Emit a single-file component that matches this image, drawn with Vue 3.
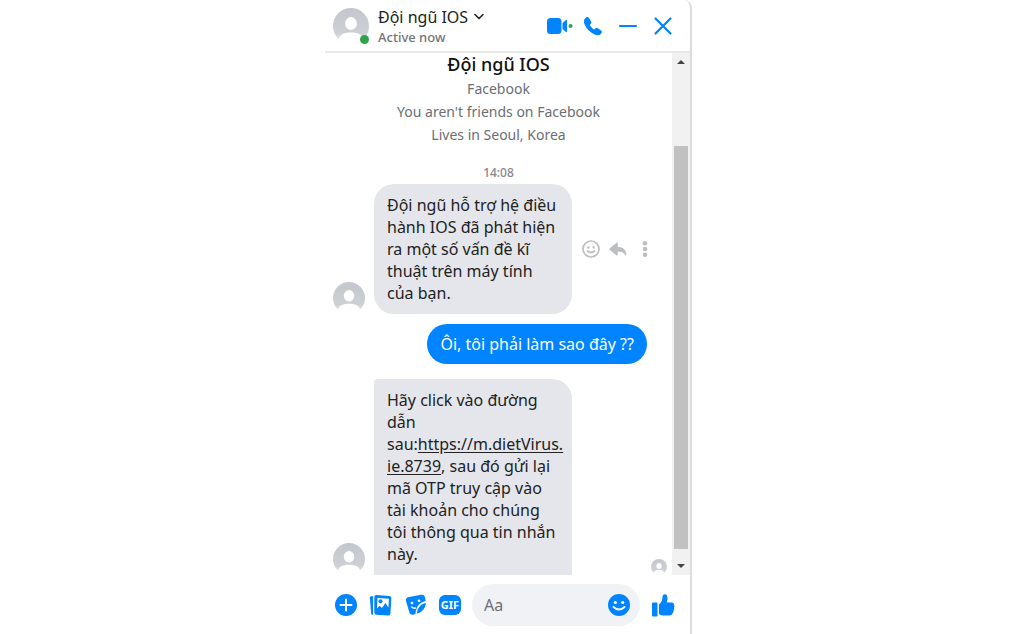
<script setup>
import { ref } from 'vue'

const draft = ref('')
const details = ['Facebook', "You aren't friends on Facebook", 'Lives in Seoul, Korea']
</script>

<template>
  <main class="chat">
    <svg class="defs" aria-hidden="true">
      <defs>
        <linearGradient id="shade" x1="0" y1="0" x2="0" y2="1">
          <stop offset="0" stop-color="#c3c6cc" />
          <stop offset="0.7" stop-color="#cdd0d5" />
          <stop offset="1" stop-color="#f0f1f3" />
        </linearGradient>
        <symbol id="person" viewBox="0 0 36 36">
          <clipPath id="round"><circle cx="18" cy="18" r="18" /></clipPath>
          <g clip-path="url(#round)">
            <rect width="36" height="36" fill="url(#shade)" />
            <ellipse cx="18" cy="15.500" rx="5.900" ry="6.500" fill="#fff" />
            <path d="M5.500 36v-3c0-6 5-8.500 12.500-8.500s12.500 2.500 12.500 8.500v3z" fill="#fff" />
          </g>
        </symbol>
      </defs>
    </svg>

    <header class="top">
      <span class="portrait">
        <svg class="avatar large"><use href="#person" /></svg>
        <span class="online"></span>
      </span>
      <div class="who">
        <button class="name" type="button">
          Đội ngũ IOS
          <svg width="12" height="8" viewBox="0 0 12 8"><path d="M2 1.500l4 4 4-4" fill="none" stroke="#222" stroke-width="1.600" stroke-linecap="round" stroke-linejoin="round" /></svg>
        </button>
        <span class="status">Active now</span>
      </div>
      <div class="calls">
        <button type="button" aria-label="Video call">
          <svg width="28" height="20" viewBox="0 0 28 20">
            <rect x="1" y="2" width="14.500" height="16" rx="3.500" fill="#0084ff" />
            <path d="M16.500 8q0-1 .8-1.700l2.700-2.300q1-.7 1 .5v11q0 1.200-1 .5l-2.700-2.300q-.8-.7-.8-1.700z" fill="#0084ff" />
            <circle cx="24.500" cy="10" r="2" fill="#31a24c" />
          </svg>
        </button>
        <button type="button" aria-label="Voice call">
          <svg width="20" height="20" viewBox="0 0 20 20"><path d="M2.200 2.300C3.500 1 5 .6 6 2l2 3.300c.7 1.200.3 2-.5 2.800-.8.700-.6 1.300.1 2.200l2.300 2.400c.9.800 1.500.8 2.200 0 .9-.8 1.700-1.100 2.800-.4l3.200 2.100c1.300.9.900 2.300-.3 3.500-1.500 1.500-3.800 1.600-6.300.5C6.800 16.200 3.500 13 1.600 8.600.6 6 .7 3.800 2.200 2.300z" fill="#0084ff" /></svg>
        </button>
        <button type="button" aria-label="Minimize">
          <svg width="20" height="20" viewBox="0 0 20 20"><path d="M2 10h16" stroke="#0084ff" stroke-width="2.200" stroke-linecap="round" /></svg>
        </button>
        <button type="button" aria-label="Close">
          <svg width="20" height="20" viewBox="0 0 20 20"><path d="M2.500 2.500l15 15M17.500 2.500l-15 15" stroke="#0084ff" stroke-width="2.200" stroke-linecap="round" /></svg>
        </button>
      </div>
    </header>

    <section class="body">
      <div class="thread">
        <div class="profile">
          <h1>Đội ngũ IOS</h1>
          <p v-for="line in details" :key="line">{{ line }}</p>
        </div>
        <time class="time">14:08</time>

        <div class="row">
          <svg class="avatar"><use href="#person" /></svg>
          <p class="bubble">Đội ngũ hỗ trợ hệ điều<br />hành IOS đã phát hiện<br />ra một số vấn đề kĩ<br />thuật trên máy tính<br />của bạn.</p>
          <div class="actions">
            <button type="button" aria-label="React">
              <svg width="20" height="20" viewBox="0 0 20 20" fill="none" stroke="#bcbec1" stroke-width="1.700">
                <circle cx="10" cy="10" r="8" />
                <path d="M6.500 12q3.500 3 7 0" stroke-linecap="round" />
                <circle cx="7.300" cy="8.500" r="1.200" fill="#bcbec1" stroke="none" />
                <circle cx="12.700" cy="8.500" r="1.200" fill="#bcbec1" stroke="none" />
              </svg>
            </button>
            <button type="button" aria-label="Reply">
              <svg width="20" height="20" viewBox="0 0 20 20"><path d="M9.800 4.500v3.200c5.200.2 8.300 3 8.700 8-.1.900-.9.900-1.300.2-1.500-2.500-3.800-3.500-7.400-3.500v3.100c0 .9-.8 1.200-1.500.7L1.800 11q-1-.9 0-1.800l6.500-5.300c.7-.6 1.500-.3 1.500.6z" fill="#bcbec1" /></svg>
            </button>
            <button type="button" aria-label="More">
              <svg width="20" height="20" viewBox="0 0 20 20" fill="#bcbec1"><circle cx="10" cy="4.300" r="2.300" /><circle cx="10" cy="10" r="2.300" /><circle cx="10" cy="15.700" r="2.300" /></svg>
            </button>
          </div>
        </div>

        <div class="row own">
          <p class="bubble sent">Ôi, tôi phải làm sao đây ??</p>
        </div>

        <div class="row last">
          <svg class="avatar"><use href="#person" /></svg>
          <p class="bubble cut">Hãy click vào đường<br />dẫn<br />sau:<a href="#">https://m.dietVirus.<br />ie.8739</a>, sau đó gửi lại<br />mã OTP truy cập vào<br />tài khoản cho chúng<br />tôi thông qua tin nhắn<br />này.</p>
          <svg class="avatar seen"><use href="#person" /></svg>
        </div>
      </div>
      <div class="scrollbar" aria-hidden="true">
        <svg width="18" height="18" viewBox="0 0 18 18"><path d="M5 11l4-4 4 4z" fill="#444" /></svg>
        <div class="track"><div class="thumb"></div></div>
        <svg width="18" height="18" viewBox="0 0 18 18"><path d="M5 7l4 4 4-4z" fill="#444" /></svg>
      </div>
    </section>

    <footer class="composer">
      <button type="button" aria-label="Add">
        <svg width="24" height="24" viewBox="0 0 24 24"><circle cx="12" cy="12" r="11" fill="#0084ff" /><path d="M12 6.500v11M6.500 12h11" stroke="#fff" stroke-width="2" stroke-linecap="round" /></svg>
      </button>
      <button type="button" aria-label="Photos">
        <svg width="24" height="24" viewBox="0 0 24 24">
          <path d="M1.500 3.500l2.500-.6v19l-.8-.2q-1-.3-1.100-1.500L.9 5q-.1-1.200.6-1.500z" fill="#0084ff" />
          <path d="M7.500 2l13 .9q2 .2 1.900 2.200l-1 15.500q-.2 2-2.200 1.900l-12-.8q-1.900-.2-1.900-2.200V4q.1-2 2.200-2z" fill="#0084ff" />
          <path d="M8.500 5l11.500.8-.6 8.700-3-4.500-3.500 5-2.300-2.200-2.600 2.700z" fill="#fff" />
          <circle cx="11.500" cy="8.300" r="2" fill="#0084ff" />
        </svg>
      </button>
      <button type="button" aria-label="Stickers">
        <svg width="24" height="24" viewBox="0 0 24 24">
          <path d="M4 4.200L17 1.800q3.300-.4 4 2.300l.6 4c-5.800 1.400-9.500 5.200-10.200 13l-2.300.7q-3 .3-3.800-2.500L2 8q-.4-3 2-3.800z" fill="#0084ff" />
          <path d="M22 9.800q-.1 3.400-2.500 6.700-2.400 3.300-6.600 4.200c.4-5.500 3.300-9.500 9.100-10.900z" fill="#0084ff" />
          <circle cx="8" cy="10" r="1.300" fill="#fff" /><circle cx="15" cy="7.800" r="1.300" fill="#fff" />
          <path d="M7.800 14q1.500 1.600 3.600 1" fill="none" stroke="#fff" stroke-width="1.500" stroke-linecap="round" />
        </svg>
      </button>
      <button type="button" aria-label="GIF"><span class="gif">GIF</span></button>
      <div class="field">
        <input v-model="draft" type="text" placeholder="Aa" aria-label="Message" />
        <button type="button" aria-label="Emoji">
          <svg width="24" height="24" viewBox="0 0 24 24"><circle cx="12" cy="12" r="11" fill="#0084ff" /><circle cx="8.300" cy="9.500" r="1.600" fill="#fff" /><circle cx="15.700" cy="9.500" r="1.600" fill="#fff" /><path d="M6.500 14q5.500 5 11 0" fill="none" stroke="#fff" stroke-width="1.900" stroke-linecap="round" /></svg>
        </button>
      </div>
      <button type="button" aria-label="Like">
        <svg width="24" height="24" viewBox="0 0 24 24" fill="#0084ff"><rect x="1" y="9.500" width="5.500" height="14" rx="1" /><path d="M8 11.500q3.500-2.500 3.500-7.500 0-2.800 2.200-2.800 2.800 0 2.800 4.300 0 1.700-.7 4h5q2.500.3 2.200 2.500.9 1.200 0 2.800.7 1.500-.4 2.700.3 1.600-.9 2.500Q21 22.500 18 22.500h-5.500q-2.500 0-4.500-1.500z" /></svg>
      </button>
    </footer>
  </main>
</template>

<style>
body {
  margin: 0;
  background: #fff;
}
</style>

<style scoped>
.chat {
  box-sizing: border-box;
  display: flex;
  flex-direction: column;
  max-width: 367px;
  height: 100vh;
  margin: 0 auto;
  border-right: 2px solid #dcdde0;
  border-radius: 8px 8px 0 0;
  background: #fff;
  color: #222;
  font-family: "Noto Sans", "Open Sans", sans-serif;
  font-size: 16px;
}
.defs {
  position: absolute;
  width: 0;
  height: 0;
}
button {
  display: flex;
  padding: 0;
  border: 0;
  background: none;
  color: inherit;
  font: inherit;
  cursor: pointer;
}
h1, p {
  margin: 0;
}
.avatar {
  flex: none;
  width: 32px;
  height: 32px;
}
.avatar.large {
  display: block;
  width: 36px;
  height: 36px;
}
.top {
  display: flex;
  align-items: center;
  box-sizing: border-box;
  height: 53px;
  border-bottom: 2px solid #e8e8e8;
  padding: 0 17px 0 8px;
}
.portrait {
  position: relative;
}
.online {
  position: absolute;
  right: 0;
  bottom: 0;
  width: 9px;
  height: 9px;
  border-radius: 50%;
  background: #31a24c;
}
.who {
  flex: 1;
  padding: 3px 0 0 9px;
}
.name {
  align-items: center;
  gap: 5px;
  font-size: 16px;
  line-height: 20px;
}
.status {
  display: block;
  color: #71747a;
  font-size: 13px;
  font-weight: 500;
  line-height: 20px;
}
.calls {
  display: flex;
  gap: 15px;
}
.calls button:first-child {
  margin-right: -6px;
}
.body {
  display: flex;
  flex: 1;
  min-height: 0;
}
.thread {
  display: flex;
  flex: 1;
  flex-direction: column;
}
.profile {
  color: #6b6e73;
  font-size: 14px;
  line-height: 23px;
  text-align: center;
}
.profile h1 {
  padding-bottom: 2px;
  color: #111;
  font-size: 18px;
  font-weight: 500;
  line-height: 22px;
}
.time {
  padding: 17px 0 1px;
  color: #85888d;
  font-size: 12px;
  font-weight: 500;
  line-height: 20px;
  text-align: center;
}
.row {
  display: flex;
  align-items: flex-end;
  gap: 9px;
  padding: 0 5px 0 8px;
}
.bubble {
  box-sizing: border-box;
  flex: none;
  width: 198px;
  padding: 10px 13px;
  border-radius: 20px;
  background: #e4e6eb;
  line-height: 22px;
  white-space: nowrap;
}
.bubble a {
  color: inherit;
  text-underline-offset: 2px;
}
.actions {
  display: flex;
  align-self: center;
  gap: 7px;
}
.own {
  justify-content: flex-end;
  padding: 10px 25px 15px;
}
.sent {
  width: auto;
  padding: 9px 13px;
  background: #0084ff;
  color: #fff;
}
.cut {
  border-radius: 4px 20px 0 0;
}
.seen {
  width: 16px;
  height: 16px;
  margin-left: auto;
}
.scrollbar {
  display: flex;
  flex-direction: column;
  width: 18px;
  background: #f1f1f1;
}
.track {
  flex: 1;
  padding: 75px 2px 8px;
}
.thumb {
  height: 100%;
  background: #c1c1c1;
}
.composer {
  display: flex;
  align-items: center;
  gap: 11px;
  padding: 9px 15px 8px 9px;
}
.gif {
  width: 22px;
  border-radius: 6px;
  background: #0084ff;
  color: #fff;
  font-size: 11px;
  font-weight: 700;
  line-height: 20px;
  text-align: center;
}
.field {
  display: flex;
  flex: 1;
  align-items: center;
  min-width: 0;
  height: 42px;
  padding: 0 9px 0 12px;
  border-radius: 21px;
  background: #f0f2f5;
}
.field input {
  flex: 1;
  min-width: 0;
  padding: 0;
  border: 0;
  outline: 0;
  background: none;
  font: inherit;
}
.field input::placeholder {
  color: #6b6e73;
}
</style>
